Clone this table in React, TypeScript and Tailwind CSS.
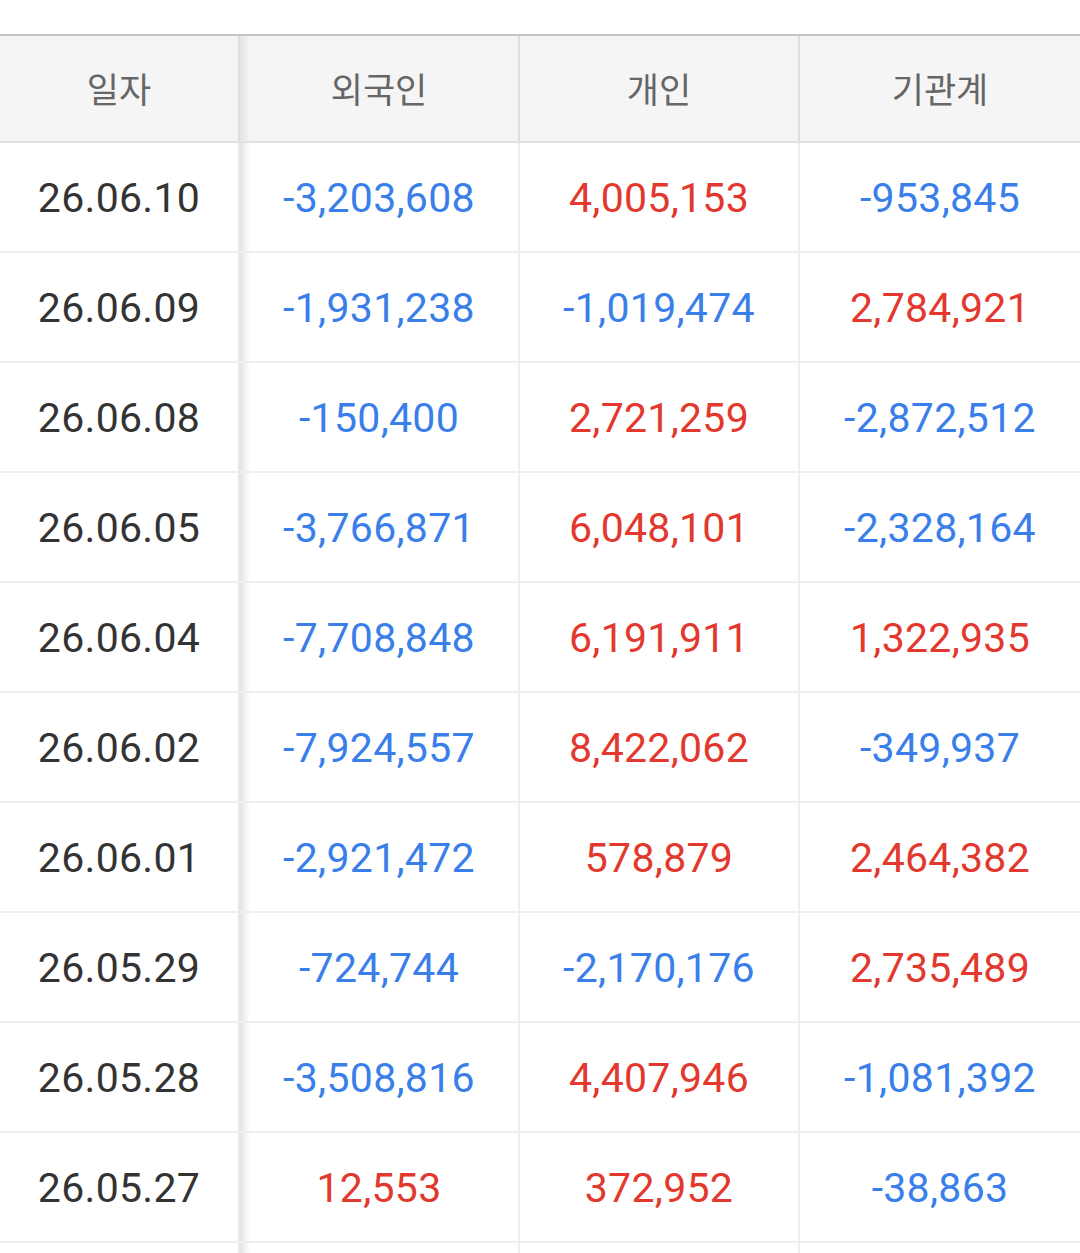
const rows: [string, string, string, string][] = [
  ['26.06.10', '-3,203,608', '4,005,153', '-953,845'],
  ['26.06.09', '-1,931,238', '-1,019,474', '2,784,921'],
  ['26.06.08', '-150,400', '2,721,259', '-2,872,512'],
  ['26.06.05', '-3,766,871', '6,048,101', '-2,328,164'],
  ['26.06.04', '-7,708,848', '6,191,911', '1,322,935'],
  ['26.06.02', '-7,924,557', '8,422,062', '-349,937'],
  ['26.06.01', '-2,921,472', '578,879', '2,464,382'],
  ['26.05.29', '-724,744', '-2,170,176', '2,735,489'],
  ['26.05.28', '-3,508,816', '4,407,946', '-1,081,392'],
  ['26.05.27', '12,553', '372,952', '-38,863'],
  ['', '', '', ''],
]

const color = (v: string) => (v.startsWith('-') ? 'text-[#3a7fe9]' : 'text-[#e2382e]')

export default function App() {
  return (
    <div className="w-[1080px] h-[1253px] overflow-hidden bg-white pt-[34px]" style={{ fontFamily: 'Roboto, "Noto Sans CJK KR", sans-serif' }}>
      {/* header */}
      <div className="flex h-[109px] bg-[#f5f5f5] border-t-2 border-b-2 border-t-[#c4c4c4] border-b-[#e2e2e2] text-[35px] text-[#666]" style={{ fontFamily: '"Noto Sans CJK KR", sans-serif' }}>
        <div className="w-[240px] flex items-center justify-center border-r-2 border-[#dedede]">일자</div>
        <div className="relative w-[280px] flex items-center justify-center border-r-2 border-[#dedede]">
          <div className="absolute left-0 top-0 bottom-0 w-[10px] bg-gradient-to-r from-[#e4e4e4] to-transparent" />
          외국인
        </div>
        <div className="w-[280px] flex items-center justify-center border-r-2 border-[#dedede]">개인</div>
        <div className="w-[280px] flex items-center justify-center">기관계</div>
      </div>

      {/* body */}
      {rows.map((r, i) => (
        <div key={i} className="flex h-[110px] border-b-2 border-[#efefef] text-[41px] tracking-[0.3px]">
          <div className="w-[240px] h-full flex items-center justify-center pt-1 text-[#333] border-r-2 border-[#e8e8e8]">
            {r[0]}
          </div>
          <div className="relative w-[280px] h-full flex items-center justify-center pt-1 border-r-2 border-[#efefef]">
            <div className="absolute left-0 top-0 bottom-0 w-[10px] bg-gradient-to-r from-[#e4e4e4] to-transparent" />
            <span className={color(r[1])}>{r[1]}</span>
          </div>
          <div className="w-[280px] h-full flex items-center justify-center pt-1 border-r-2 border-[#efefef]">
            <span className={color(r[2])}>{r[2]}</span>
          </div>
          <div className="w-[280px] h-full flex items-center justify-center pt-1">
            <span className={color(r[3])}>{r[3]}</span>
          </div>
        </div>
      ))}
    </div>
  )
}
